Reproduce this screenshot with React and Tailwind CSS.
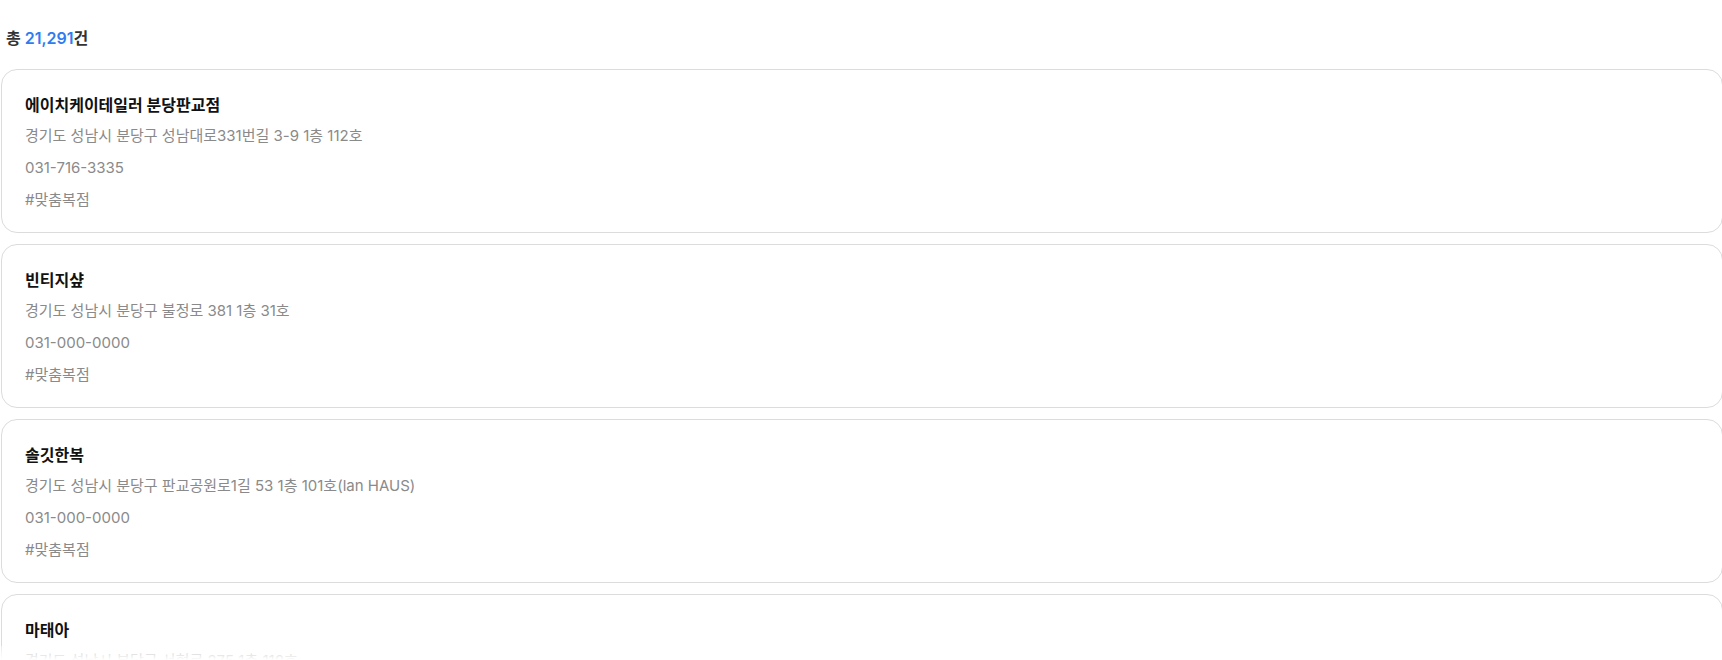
import React from "react";

const shops = [
  {
    name: "에이치케이테일러 분당판교점",
    address: "경기도 성남시 분당구 성남대로331번길 3-9 1층 112호",
    phone: "031-716-3335",
    tag: "#맞춤복점",
  },
  {
    name: "빈티지샾",
    address: "경기도 성남시 분당구 불정로 381 1층 31호",
    phone: "031-000-0000",
    tag: "#맞춤복점",
  },
  {
    name: "솔깃한복",
    address: "경기도 성남시 분당구 판교공원로1길 53 1층 101호(lan HAUS)",
    phone: "031-000-0000",
    tag: "#맞춤복점",
  },
  {
    name: "마태아",
    address: "경기도 성남시 분당구 서현로 275 1층 110호",
    phone: "031-000-0000",
    tag: "#맞춤복점",
  },
];

const ShopCard = ({ shop }) => (
  <li className="rounded-2xl border border-[#dcdcdc] bg-white pl-[23px] pr-6 pt-[23px] pb-4">
    <h3 className="text-base leading-6 font-bold text-[#111]">{shop.name}</h3>
    <div className="mt-[3px] flex flex-col text-[15px] leading-8 text-[#8a8a8a]">
      <p>{shop.address}</p>
      <p>{shop.phone}</p>
      <p>{shop.tag}</p>
    </div>
  </li>
);

export default function App() {
  return (
    <div
      className="relative h-[660px] w-full overflow-hidden bg-white"
      style={{ fontFamily: '"Inter", "Noto Sans CJK KR", sans-serif' }}
    >
      <p className="pl-[6px] pt-[26px] text-base leading-6 font-semibold text-[#333]">
        총 <span className="text-[#2f7cf0]">21,291</span>건
      </p>
      <ul className="mt-[19px] ml-px mr-[-1px] flex flex-col gap-[11px]">
        {shops.map((shop) => (
          <ShopCard key={shop.name} shop={shop} />
        ))}
      </ul>
      <div className="pointer-events-none absolute bottom-0 left-0 right-0 h-[14px] bg-gradient-to-b from-white/40 to-white" />
    </div>
  );
}
